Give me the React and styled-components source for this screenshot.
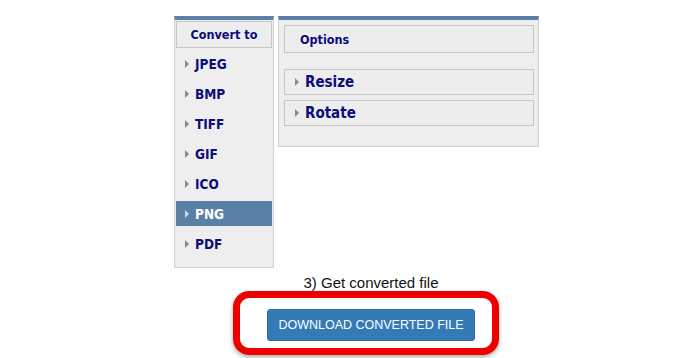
import React from "react";
import styled, { createGlobalStyle } from "styled-components";

const Global = createGlobalStyle`
  html, body { margin: 0; padding: 0; background: #fff; }
  body { width: 700px; height: 358px; overflow: hidden; }
`;

const Page = styled.div`
  width: 700px;
  height: 358px;
  display: flex;
  flex-direction: column;
  padding-top: 16px;
  box-sizing: border-box;
`;

const PanelRow = styled.div`
  display: flex;
  align-items: flex-start;
  gap: 4px;
  padding-left: 174px;
`;

const Panel = styled.div`
  box-sizing: border-box;
  width: ${(p) => p.$w}px;
  height: ${(p) => p.$h}px;
  background: #eeeeee;
  border: 1px solid #d2d2d2;
  border-top: 4px solid #5b80a8;
  display: flex;
  flex-direction: column;
  padding: ${(p) => p.$pad};
`;

const HeaderBox = styled.div`
  box-sizing: border-box;
  height: 27px;
  border: 1px solid #c6c6c6;
  background: #ededed;
  display: flex;
  align-items: center;
  justify-content: center;
  font-family: "DejaVu Sans Condensed", "DejaVu Sans", sans-serif;
  font-weight: bold;
  font-size: 12.5px;
  color: #0c0c7a;
`;

const Item = styled.div`
  height: 25px;
  margin-top: ${(p) => (p.$first ? 3 : 5)}px;
  display: flex;
  align-items: center;
  padding-left: 9px;
  gap: 6px;
  background: ${(p) => (p.$active ? "#5b80a8" : "transparent")};
  color: ${(p) => (p.$active ? "#ffffff" : "#0c0c7a")};
  font-family: "DejaVu Sans Condensed", "DejaVu Sans", sans-serif;
  font-weight: bold;
  font-size: 13.5px;
`;

const Arrow = styled.span`
  width: 0;
  height: 0;
  border-top: 4px solid transparent;
  border-bottom: 4px solid transparent;
  border-left: 4px solid ${(p) => (p.$active ? "#d8d8d8" : "#8a8a8a")};
`;

const Option = styled.div`
  box-sizing: border-box;
  height: ${(p) => p.$h}px;
  margin-top: ${(p) => p.$mt}px;
  border: 1px solid #c6c6c6;
  background: #ededed;
  display: flex;
  align-items: center;
  padding-left: ${(p) => (p.$title ? 15 : 10)}px;
  gap: 6px;
  font-family: "DejaVu Sans Condensed", "DejaVu Sans", sans-serif;
  font-weight: bold;
  font-size: ${(p) => (p.$title ? 12.5 : 15)}px;
  color: #0c0c7a;
`;

const Bottom = styled.div`
  display: flex;
  flex-direction: column;
  align-items: center;
  padding-left: 32px;
`;

const StepText = styled.div`
  margin-top: 5px;
  margin-left: 10px;
  height: 20px;
  line-height: 20px;
  font-family: "Liberation Sans", Arial, sans-serif;
  font-size: 15px;
  color: #111;
`;

const Highlight = styled.div`
  box-sizing: border-box;
  width: 266px;
  height: 64px;
  margin-top: -2px;
  border: 7px solid #ee0000;
  border-radius: 16px;
  box-shadow: 0 2px 4px rgba(0, 0, 0, 0.35);
  display: flex;
  align-items: flex-start;
  padding: 11px 17px 0 27px;
`;

const DownloadButton = styled.button`
  box-sizing: border-box;
  width: 208px;
  height: 32px;
  border: 1px solid #2e6da4;
  border-radius: 3px;
  background: #337ab7;
  color: #fff;
  font-family: "Liberation Sans", Arial, sans-serif;
  font-size: 12.5px;
  text-transform: uppercase;
  padding: 0;
  cursor: pointer;
`;

const formats = ["JPEG", "BMP", "TIFF", "GIF", "ICO", "PNG", "PDF"];

export default function App() {
  return (
    <>
      <Global />
      <Page>
        <PanelRow>
          <Panel $w={100} $h={252} $pad="1px 1px 0 1px">
            <HeaderBox>Convert to</HeaderBox>
            {formats.map((f, i) => (
              <Item key={f} $first={i === 0} $active={f === "PNG"}>
                <Arrow $active={f === "PNG"} />
                {f}
              </Item>
            ))}
          </Panel>
          <Panel $w={261} $h={131} $pad="5px 4px 0 5px">
            <Option $h={28} $mt={0} $title>
              Options
            </Option>
            <Option $h={26} $mt={16}>
              <Arrow />
              Resize
            </Option>
            <Option $h={26} $mt={5}>
              <Arrow />
              Rotate
            </Option>
          </Panel>
        </PanelRow>
        <Bottom>
          <StepText>3) Get converted file</StepText>
          <Highlight>
            <DownloadButton>Download converted file</DownloadButton>
          </Highlight>
        </Bottom>
      </Page>
    </>
  );
}
